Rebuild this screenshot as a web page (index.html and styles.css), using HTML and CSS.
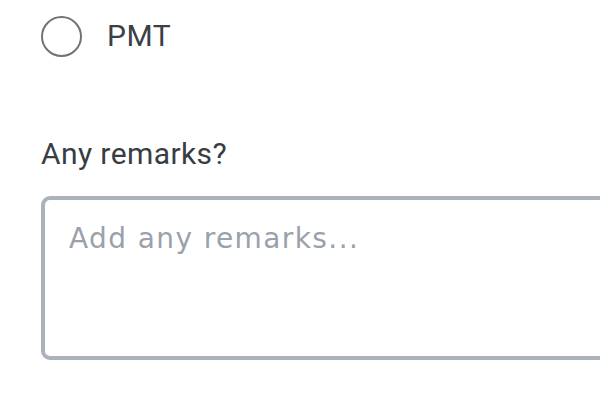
FILE: index.html
```html
<!DOCTYPE html>
<html>
<head>
<meta charset="utf-8">
<link rel="stylesheet" href="styles.css">
</head>
<body>
<div class="form">
  <label class="option">
    <span class="radio"></span>
    <span class="option-text">PMT</span>
  </label>
  <div class="field">
    <div class="field-label">Any remarks?</div>
    <textarea class="remarks" placeholder="Add any remarks..."></textarea>
  </div>
</div>
</body>
</html>
```
FILE: styles.css
```css
html, body {
  margin: 0;
  padding: 0;
  background: #ffffff;
}
.form {
  padding: 15px 0 0 41px;
  display: flex;
  flex-direction: column;
}
.option {
  display: flex;
  align-items: center;
  gap: 25px;
  height: 42px;
}
.radio {
  width: 37px;
  height: 37px;
  border: 2px solid #6f7378;
  border-radius: 50%;
  box-sizing: content-box;
}
.option-text {
  font-family: Roboto, sans-serif;
  font-size: 30px;
  color: #3b4047;
  letter-spacing: 0.5px;
  margin-top: -2px;
}
.field {
  margin-top: 79px;
  display: flex;
  flex-direction: column;
}
.field-label {
  font-family: Roboto, sans-serif;
  font-size: 30px;
  line-height: 36px;
  letter-spacing: 0.4px;
  color: #383d44;
}
.remarks {
  margin-top: 24px;
  width: 620px;
  height: 164px;
  box-sizing: border-box;
  border: 4px solid #aab2bc;
  border-radius: 9px;
  padding: 22px 24px;
  font-family: "DejaVu Sans", sans-serif;
  font-size: 28px;
  letter-spacing: 1.4px;
  resize: none;
  outline: none;
  background: #fff;
}
.remarks::placeholder {
  color: #9aa1ab;
}
```
